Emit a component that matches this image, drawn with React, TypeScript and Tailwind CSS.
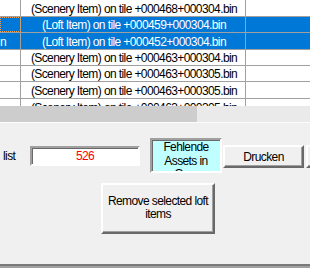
import React from "react";

const rows = [
  { name: "", file: "(Scenery Item) on tile +000468+000304.bin", h: "h-[17px]", selected: false, focus: false },
  { name: "", file: "(Loft Item) on tile +000459+000304.bin", h: "h-[16px]", selected: true, focus: true },
  { name: "n", file: "(Loft Item) on tile +000452+000304.bin", h: "h-[17px]", selected: true, focus: false },
  { name: "", file: "(Scenery Item) on tile +000463+000304.bin", h: "h-[16px]", selected: false, focus: false },
  { name: "", file: "(Scenery Item) on tile +000463+000305.bin", h: "h-[16px]", selected: false, focus: false },
  { name: "", file: "(Scenery Item) on tile +000463+000305.bin", h: "h-[17px]", selected: false, focus: false },
  { name: "", file: "(Scenery Item) on tile +000463+000305.bin", h: "h-[17px]", selected: false, focus: false },
];

const raised =
  "border-2 border-t-white border-l-white border-r-[#696969] border-b-[#696969] shadow-[inset_-1px_-1px_0_#a0a0a0] bg-[#f0f0f0]";
const sunken =
  "border-2 border-t-[#a0a0a0] border-l-[#a0a0a0] border-r-white border-b-white shadow-[inset_1px_1px_0_#696969]";

export default function App() {
  return (
    <div
      className="w-[310px] h-[268px] overflow-hidden bg-[#f0f0f0] text-black text-[12px] tracking-[-0.6px]"
      style={{ fontFamily: '"Liberation Sans", Arial, sans-serif' }}
    >
      {/* Grid */}
      <div className="h-[106px] overflow-hidden bg-white">
        {rows.map((row, i) => (
          <div
            key={i}
            className={`${row.h} flex border-b border-[#a0a0a0] ${
              row.selected ? "bg-[#0078d7] text-white" : "bg-white"
            }`}
          >
            <div
              className={`w-[21px] shrink-0 border-r border-[#a0a0a0] flex items-center overflow-hidden pt-[1px] ${
                row.focus ? "outline-1 outline-dotted outline-[#f0a050] -outline-offset-1" : ""
              }`}
            >
              {row.name}
            </div>
            <div className="w-[225px] shrink-0 border-r border-[#a0a0a0] flex items-center justify-center whitespace-nowrap overflow-hidden pt-[1px] pl-[2px]">
              {row.file}
            </div>
            <div className="flex-1" />
          </div>
        ))}
      </div>

      {/* Horizontal scrollbar */}
      <div className="h-[16px] flex bg-[#eaeaea]">
        <div className="w-[197px] bg-[#cdcdcd]" />
      </div>
      <div className="h-[1px] bg-[#fcfcfc]" />

      {/* Panel */}
      <div className="h-[141px] pt-[15px]">
        <div className="flex items-start w-[400px]">
          <div className="w-[30px] shrink-0 pl-[3px] mt-[8px] h-[20px] flex items-center">list</div>
          <div
            className={`w-[110px] shrink-0 h-[20px] mt-[8px] bg-white ${sunken} flex items-center justify-center text-[#ff0000]`}
          >
            526
          </div>
          <div
            className={`ml-[10px] w-[72px] shrink-0 h-[35px] bg-[#c0ffff] ${sunken} overflow-hidden text-center leading-[13.5px] pt-[1px]`}
          >
            Fehlende
            <br />
            Assets in
            <br />
            Gver
          </div>
          <button
            className={`ml-[1px] mt-[7px] w-[81px] h-[23px] shrink-0 ${raised} flex items-center justify-center`}
          >
            Drucken
          </button>
          <button className={`ml-[2px] mt-[7px] w-[60px] h-[23px] shrink-0 ${raised}`} />
        </div>

        <button
          className={`ml-[101px] mt-[10px] w-[114px] h-[51px] ${raised} flex flex-col items-center justify-center leading-[13px] pb-[2px]`}
        >
          <span>Remove selected loft</span>
          <span>items</span>
        </button>
      </div>

      {/* Bottom edge */}
      <div className="h-[2px] bg-[#7a7a7a]" />
      <div className="h-[2px] bg-[#a0a0a0]" />
    </div>
  );
}
